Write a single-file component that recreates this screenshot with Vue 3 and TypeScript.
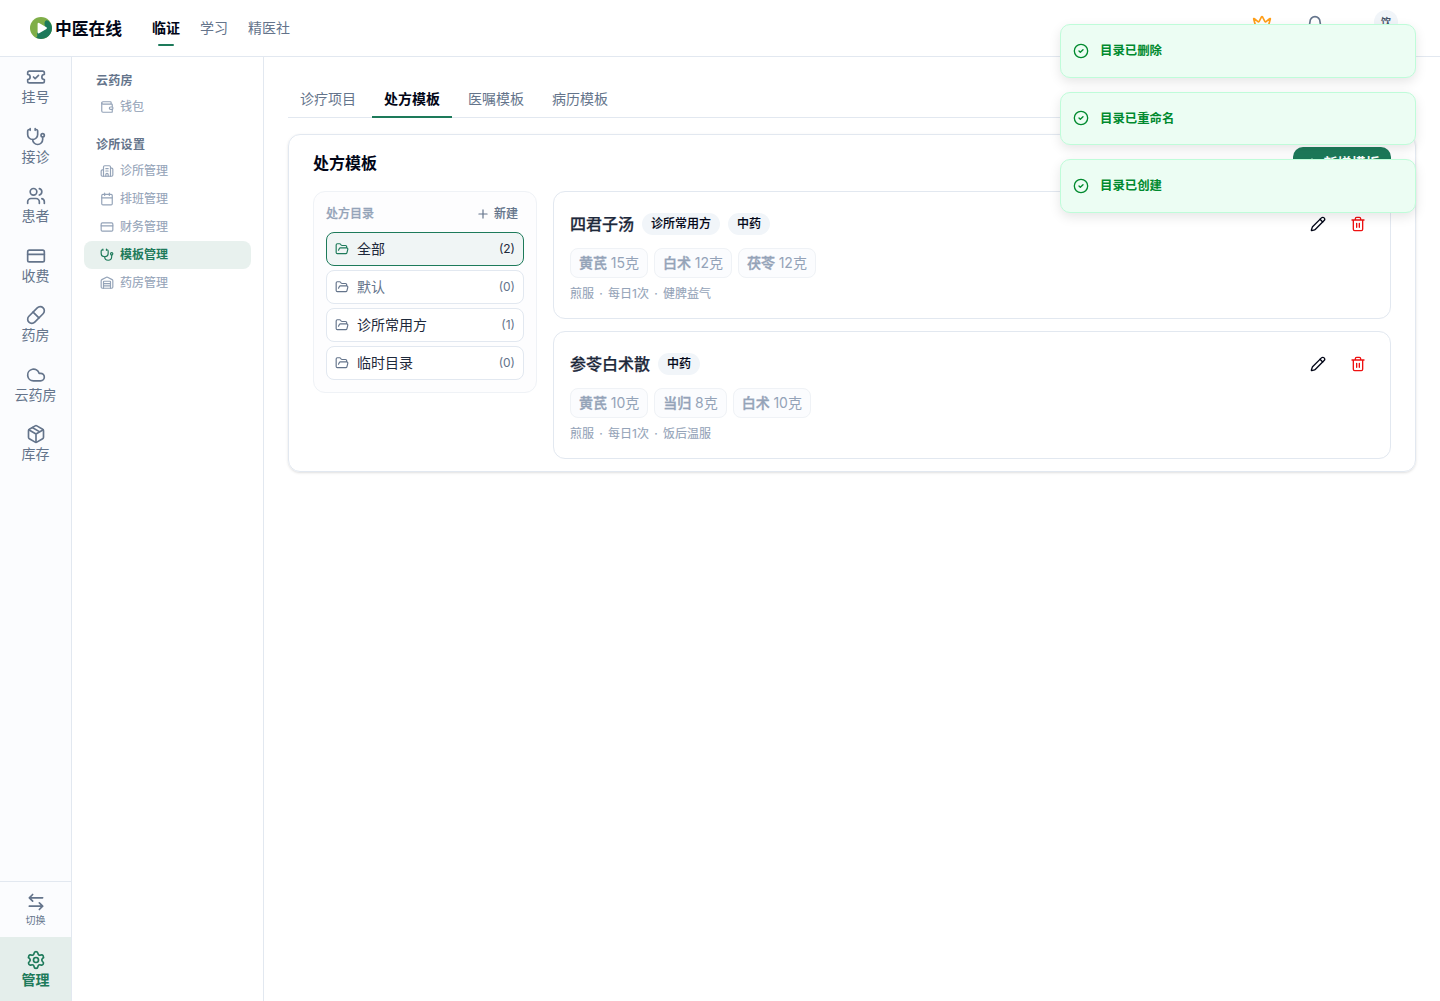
<script setup lang="ts">
import { defineComponent, h } from 'vue'

const icons: Record<string, string> = {
  ticket: '<path d="M2 9a3 3 0 0 1 0 6v2a2 2 0 0 0 2 2h16a2 2 0 0 0 2-2v-2a3 3 0 0 1 0-6V7a2 2 0 0 0-2-2H4a2 2 0 0 0-2 2Z"/><path d="m9 12 2 2 4-4"/>',
  stethoscope: '<path d="M11 2v2M5 2v2M5 3H4a2 2 0 0 0-2 2v4a6 6 0 0 0 12 0V5a2 2 0 0 0-2-2h-1"/><path d="M8 15a6 6 0 0 0 12 0v-3"/><circle cx="20" cy="10" r="2"/>',
  users: '<path d="M16 21v-2a4 4 0 0 0-4-4H6a4 4 0 0 0-4 4v2M16 3.128a4 4 0 0 1 0 7.744M22 21v-2a4 4 0 0 0-3-3.87"/><circle cx="9" cy="7" r="4"/>',
  card: '<rect width="20" height="14" x="2" y="5" rx="2"/><path d="M2 10h20"/>',
  pill: '<path d="m10.5 20.5 10-10a4.95 4.95 0 1 0-7-7l-10 10a4.95 4.95 0 1 0 7 7Z"/><path d="m8.5 8.5 7 7"/>',
  cloud: '<path d="M17.5 19H9a7 7 0 1 1 6.71-9h1.79a4.5 4.5 0 1 1 0 9Z"/>',
  box: '<path d="M11 21.73a2 2 0 0 0 2 0l7-4A2 2 0 0 0 21 16V8a2 2 0 0 0-1-1.73l-7-4a2 2 0 0 0-2 0l-7 4A2 2 0 0 0 3 8v8a2 2 0 0 0 1 1.73z"/><path d="M12 22V12M3.29 7 12 12l8.71-5M7.5 4.27l9 5.15"/>',
  swap: '<path d="M8 3 4 7l4 4M4 7h16M16 21l4-4-4-4M20 17H4"/>',
  gear: '<path d="M9.671 4.136a2.34 2.34 0 0 1 4.659 0 2.34 2.34 0 0 0 3.319 1.915 2.34 2.34 0 0 1 2.33 4.033 2.34 2.34 0 0 0 0 3.831 2.34 2.34 0 0 1-2.33 4.033 2.34 2.34 0 0 0-3.319 1.915 2.34 2.34 0 0 1-4.659 0 2.34 2.34 0 0 0-3.32-1.915 2.34 2.34 0 0 1-2.33-4.033 2.34 2.34 0 0 0 0-3.831A2.34 2.34 0 0 1 6.35 6.051a2.34 2.34 0 0 0 3.319-1.915"/><circle cx="12" cy="12" r="3"/>',
  wallet: '<path d="M19 7V4a1 1 0 0 0-1-1H5a2 2 0 0 0 0 4h15a1 1 0 0 1 1 1v4h-3a2 2 0 0 0 0 4h3a1 1 0 0 0 1-1v-2a1 1 0 0 0-1-1"/><path d="M3 5v14a2 2 0 0 0 2 2h15a1 1 0 0 0 1-1v-4"/>',
  building: '<path d="M10 12h4M10 8h4M14 21v-3a2 2 0 0 0-4 0v3"/><path d="M6 10H4a2 2 0 0 0-2 2v7a2 2 0 0 0 2 2h16a2 2 0 0 0 2-2V9a2 2 0 0 0-2-2h-2"/><path d="M6 21V5a2 2 0 0 1 2-2h8a2 2 0 0 1 2 2v16"/>',
  calendar: '<path d="M8 2v4M16 2v4M3 10h18"/><rect width="18" height="18" x="3" y="4" rx="2"/>',
  warehouse: '<path d="M18 21V10a1 1 0 0 0-1-1H7a1 1 0 0 0-1 1v11"/><path d="M22 19a2 2 0 0 1-2 2H4a2 2 0 0 1-2-2V8a2 2 0 0 1 1.132-1.803l7.95-3.974a2 2 0 0 1 1.837 0l7.948 3.974A2 2 0 0 1 22 8zM6 13h12M6 17h12"/>',
  folder: '<path d="m6 14 1.5-2.9A2 2 0 0 1 9.24 10H20a2 2 0 0 1 1.94 2.5l-1.54 6a2 2 0 0 1-1.95 1.5H4a2 2 0 0 1-2-2V5a2 2 0 0 1 2-2h3.9a2 2 0 0 1 1.69.9l.81 1.2a2 2 0 0 0 1.67.9H18a2 2 0 0 1 2 2v2"/>',
  pencil: '<path d="M21.174 6.812a1 1 0 0 0-3.986-3.987L3.842 16.174a2 2 0 0 0-.5.83l-1.321 4.352a.5.5 0 0 0 .623.622l4.353-1.32a2 2 0 0 0 .83-.497z"/><path d="m15 5 4 4"/>',
  trash: '<path d="M10 11v6M14 11v6M19 6v14a2 2 0 0 1-2 2H7a2 2 0 0 1-2-2V6M3 6h18M8 6V4a2 2 0 0 1 2-2h4a2 2 0 0 1 2 2v2"/>',
  check: '<circle cx="12" cy="12" r="10"/><path d="m9 12 2 2 4-4"/>',
  crown: '<path d="M11.562 3.266a.5.5 0 0 1 .876 0L15.39 8.87a1 1 0 0 0 1.516.294L21.183 5.5a.5.5 0 0 1 .798.519l-2.834 10.246a1 1 0 0 1-.956.734H5.81a1 1 0 0 1-.957-.734L2.02 6.02a.5.5 0 0 1 .798-.519l4.276 3.664a1 1 0 0 0 1.516-.294zM5 21h14"/>',
  bell: '<path d="M10.268 21a2 2 0 0 0 3.464 0M3.262 15.326A1 1 0 0 0 4 17h16a1 1 0 0 0 .74-1.673C19.41 13.956 18 12.499 18 8A6 6 0 0 0 6 8c0 4.499-1.411 5.956-2.738 7.326"/>',
  plus: '<path d="M5 12h14M12 5v14"/>',
}

const Icon = defineComponent({
  props: {
    name: { type: String, required: true },
    size: { type: Number, default: 14 },
    weight: { type: Number, default: 2 },
  },
  setup(props) {
    return () =>
      h('svg', {
        width: props.size,
        height: props.size,
        viewBox: '0 0 24 24',
        fill: 'none',
        stroke: 'currentColor',
        'stroke-width': props.weight,
        'stroke-linecap': 'round',
        'stroke-linejoin': 'round',
        style: 'display:block;flex:none',
        innerHTML: icons[props.name],
      })
  },
})

interface NavItem { icon: string; label: string; active?: boolean }
interface Folder { name: string; count: number; active?: boolean; muted?: boolean }
interface Template { name: string; tags: string[]; herbs: [string, string][]; usage: string }

const rail: NavItem[] = [
  { icon: 'ticket', label: '挂号' },
  { icon: 'stethoscope', label: '接诊' },
  { icon: 'users', label: '患者' },
  { icon: 'card', label: '收费' },
  { icon: 'pill', label: '药房' },
  { icon: 'cloud', label: '云药房' },
  { icon: 'box', label: '库存' },
]

const groups: { title: string; items: NavItem[] }[] = [
  { title: '云药房', items: [{ icon: 'wallet', label: '钱包' }] },
  {
    title: '诊所设置',
    items: [
      { icon: 'building', label: '诊所管理' },
      { icon: 'calendar', label: '排班管理' },
      { icon: 'card', label: '财务管理' },
      { icon: 'stethoscope', label: '模板管理', active: true },
      { icon: 'warehouse', label: '药房管理' },
    ],
  },
]

const tabs = ['诊疗项目', '处方模板', '医嘱模板', '病历模板']

const folders: Folder[] = [
  { name: '全部', count: 2, active: true },
  { name: '默认', count: 0, muted: true },
  { name: '诊所常用方', count: 1 },
  { name: '临时目录', count: 0 },
]

const templates: Template[] = [
  {
    name: '四君子汤',
    tags: ['诊所常用方', '中药'],
    herbs: [['黄芪', '15克'], ['白术', '12克'], ['茯苓', '12克']],
    usage: '煎服 · 每日1次 · 健脾益气',
  },
  {
    name: '参苓白术散',
    tags: ['中药'],
    herbs: [['黄芪', '10克'], ['当归', '8克'], ['白术', '10克']],
    usage: '煎服 · 每日1次 · 饭后温服',
  },
]

const toasts = ['目录已删除', '目录已重命名', '目录已创建']
</script>

<template>
  <div class="app">
    <header class="top">
      <div class="brand">
        <svg class="logo" width="22" height="22" viewBox="0 0 22 22">
          <circle cx="11" cy="11" r="11" fill="#7fae48" />
          <path d="M16.500 3.200C19.500 3.500 22 7.500 22 11A11 11 0 0 1 5.500 20.500C8.500 20.500 6.500 17.500 7.500 15L15 9C14 6.500 14.500 4 16.500 3.200Z" fill="#1d7a5a" />
          <path d="M8.600 6.800v8.600l7.300-4.300z" fill="#fff" stroke="#fff" stroke-width="2" stroke-linejoin="round" />
        </svg>
        <span class="brand-name">中医在线</span>
      </div>
      <nav class="top-nav">
        <a class="on">临证</a>
        <a>学习</a>
        <a>精医社</a>
      </nav>
      <div class="tools">
        <Icon name="crown" :size="20" class="crown" />
        <Icon name="bell" :size="20" class="bell" />
        <span class="avatar">饮</span>
      </div>
    </header>

    <div class="body">
      <aside class="rail">
        <a v-for="r in rail" :key="r.label" class="rail-item">
          <Icon :name="r.icon" :size="20" />
          <span>{{ r.label }}</span>
        </a>
        <a class="switch">
          <Icon name="swap" :size="20" />
          <span>切换</span>
        </a>
        <a class="manage">
          <Icon name="gear" :size="20" />
          <span>管理</span>
        </a>
      </aside>

      <aside class="side">
        <section v-for="g in groups" :key="g.title" class="group">
          <h3>{{ g.title }}</h3>
          <a v-for="i in g.items" :key="i.label" class="side-item" :class="{ on: i.active }">
            <Icon :name="i.icon" />
            <span>{{ i.label }}</span>
          </a>
        </section>
      </aside>

      <main class="main">
        <nav class="tabs">
          <a v-for="(t, n) in tabs" :key="t" :class="{ on: n === 1 }">{{ t }}</a>
        </nav>

        <section class="panel">
          <div class="panel-head">
            <h2>处方模板</h2>
            <button class="primary"><Icon name="plus" />新增模板</button>
          </div>
          <div class="panel-body">
            <div class="dirs">
              <div class="dirs-head">
                <span>处方目录</span>
                <button class="add"><Icon name="plus" />新建</button>
              </div>
              <div class="dir-list">
                <div v-for="f in folders" :key="f.name" class="dir" :class="{ on: f.active, muted: f.muted }">
                  <Icon name="folder" />
                  <span class="dir-name">{{ f.name }}</span>
                  <span class="count">({{ f.count }})</span>
                </div>
              </div>
            </div>

            <div class="cards">
              <article v-for="t in templates" :key="t.name" class="card">
                <div class="card-head">
                  <h4>{{ t.name }}</h4>
                  <span v-for="tag in t.tags" :key="tag" class="tag">{{ tag }}</span>
                  <div class="actions">
                    <button><Icon name="pencil" :size="16" /></button>
                    <button class="del"><Icon name="trash" :size="16" /></button>
                  </div>
                </div>
                <div class="herbs">
                  <span v-for="b in t.herbs" :key="b[0]" class="herb"><b>{{ b[0] }}</b> {{ b[1] }}</span>
                </div>
                <p class="usage">{{ t.usage }}</p>
              </article>
            </div>
          </div>
        </section>
      </main>
    </div>

    <div class="toasts">
      <div v-for="m in toasts" :key="m" class="toast">
        <Icon name="check" :size="16" />
        <span>{{ m }}</span>
      </div>
    </div>
  </div>
</template>

<style>
body { margin: 0; background: #fff; }
</style>

<style scoped>
* { box-sizing: border-box; }
.app {
  position: relative;
  height: 1001px;
  display: flex;
  flex-direction: column;
  overflow: hidden;
  background: #fff;
  color: #020617;
  font-family: Inter, "Noto Sans CJK SC", sans-serif;
  font-size: 14px;
  line-height: 20px;
}
h2, h3, h4, p { margin: 0; }
button { border: 0; padding: 0; background: none; font: inherit; color: inherit; display: flex; align-items: center; justify-content: center; }

.top { height: 57px; flex: none; display: flex; align-items: center; border-bottom: 1px solid #e2e8f0; padding: 0 42px 0 30px; }
.brand { display: flex; align-items: center; gap: 3px; width: 122px; }
.brand-name { font-size: 16.8px; font-weight: 700; line-height: 24px; white-space: nowrap; padding-top: 1px; }
.top-nav { display: flex; gap: 20px; height: 56px; }
.top-nav a { position: relative; line-height: 56px; color: #64748b; }
.top-nav .on { color: #020617; font-weight: 600; }
.top-nav .on::after { content: ""; position: absolute; left: 6px; right: 6px; bottom: 10px; height: 2px; border-radius: 2px; background: #1d7a5a; }
.tools { margin-left: auto; height: 56px; display: flex; align-items: flex-start; padding-top: 10px; }
.crown { color: #ff9f1a; margin: 4px 32.5px 0 0; }
.bell { color: #64748b; margin: 5px 49.5px 0 0; }
.avatar { width: 24px; height: 24px; border-radius: 50%; background: #f1f5f9; color: #475569; font-size: 10px; font-weight: 600; line-height: 24px; text-align: center; }

.body { flex: 1; display: flex; min-height: 0; }
.rail { width: 72px; flex: none; border-right: 1px solid #e2e8f0; background: #fbfcfe; display: flex; flex-direction: column; color: #64748b; }
.rail a { display: flex; flex-direction: column; align-items: center; }
.rail-item { height: 59.5px; padding-top: 10px; gap: 1px; line-height: 17.5px; }
.switch { margin-top: auto; height: 56px; padding-top: 10px; border-top: 1px solid #e2e8f0; font-size: 10px; line-height: 15px; gap: 1px; }
.manage { height: 64px; padding-top: 13px; gap: 1px; line-height: 17.5px; background: #e4eeeb; color: #1d7a5a; font-weight: 600; }

.side { width: 192px; flex: none; border-right: 1px solid #e2e8f0; padding: 12px; font-size: 12px; }
.group { margin-bottom: 12px; }
.group h3 { padding: 4px 12px; font-size: 12px; line-height: 16px; font-weight: 600; letter-spacing: .3px; color: #64748b; }
.side-item { display: flex; align-items: center; gap: 6px; height: 28px; padding-left: 16px; border-radius: 8px; color: #94a3b8; -webkit-text-stroke: .1px currentColor; }
.side-item.on { background: #e8f1ee; color: #1d7a5a; font-weight: 600; -webkit-text-stroke: 0; }

.main { flex: 1; min-width: 0; padding: 24px; }
.tabs { display: flex; gap: 4px; height: 37px; border-bottom: 1px solid #e2e8f0; margin-bottom: 16px; }
.tabs a { height: 37px; padding: 8px 12px; border-bottom: 2px solid transparent; color: #64748b; }
.tabs .on { color: #020617; font-weight: 600; border-color: #1d7a5a; }

.panel { border: 1px solid #e2e8f0; border-radius: 12px; box-shadow: 0 1px 3px rgba(0, 0, 0, .1), 0 1px 2px -1px rgba(0, 0, 0, .1); }
.panel-head { display: flex; align-items: center; justify-content: space-between; padding: 12px 24px; }
.panel-head h2 { font-size: 16px; line-height: 24px; font-weight: 600; }
.primary { width: 98px; height: 32px; gap: 5px; border-radius: 10px; background: #1d7a5a; color: #fff; font-weight: 600; }
.panel-body { display: flex; align-items: flex-start; gap: 16px; padding: 0 24px 12px; }

.dirs { width: 224px; flex: none; border: 1px solid #eff2f6; border-radius: 12px; background: #fdfdfe; padding: 12px; }
.dirs-head { display: flex; align-items: center; justify-content: space-between; height: 20px; margin-bottom: 8px; font-size: 12px; font-weight: 500; color: #94a3b8; -webkit-text-stroke: .25px currentColor; }
.add { gap: 4px; padding-right: 6px; color: #64748b; -webkit-text-stroke: .15px currentColor; }
.dir-list { display: flex; flex-direction: column; gap: 4px; }
.dir { display: flex; align-items: center; gap: 8px; height: 34px; padding: 0 8px; border: 1px solid #e2e8f0; border-radius: 8px; background: #fff; color: #64748b; }
.dir-name { flex: 1; color: #1e293b; }
.dir.muted .dir-name { color: #64748b; }
.count { font-size: 12px; }
.dir.on { border-color: #1d7a5a; background: #f0f5f5; color: #1d7a5a; }
.dir.on .count { color: #1e293b; }

.cards { flex: 1; min-width: 0; display: flex; flex-direction: column; gap: 12px; }
.card { border: 1px solid #e2e8f0; border-radius: 12px; padding: 16px; height: 128px; }
.card-head { display: flex; align-items: center; gap: 8px; height: 32px; }
.card-head h4 { font-size: 16px; font-weight: 500; color: #1e293b; line-height: 24px; -webkit-text-stroke: .25px currentColor; }
.tag { height: 22px; padding: 0 9px; border-radius: 11px; background: #f1f5f9; font-size: 12px; font-weight: 500; line-height: 22px; -webkit-text-stroke: .12px currentColor; }
.actions { margin-left: auto; display: flex; gap: 8px; }
.actions button { width: 32px; height: 32px; }
.del { color: #ee1111; }
.herbs { display: flex; gap: 6px; margin-top: 8px; }
.herb { height: 30px; padding: 4px 8px; border: 1px solid #eff2f6; border-radius: 8px; background: #fbfcfe; color: #94a3b8; word-spacing: -.2px; }
.herb b { font-weight: 500; -webkit-text-stroke: .35px currentColor; }
.usage { margin-top: 8px; font-size: 12px; line-height: 16px; color: #94a3b8; word-spacing: 1.9px; -webkit-text-stroke: .1px currentColor; }

.toasts { position: absolute; top: 24px; right: 24px; width: 356px; display: flex; flex-direction: column; gap: 14px; }
.toast { height: 53.5px; display: flex; align-items: center; gap: 11px; padding: 0 12px; border: 1px solid #bffcd9; border-radius: 10px; background: #ecfdf3; color: #008a2e; box-shadow: 0 4px 12px rgba(0, 0, 0, .1); font-size: 12.400px; font-weight: 600; }
.toast span { padding-top: 1px; }
</style>
